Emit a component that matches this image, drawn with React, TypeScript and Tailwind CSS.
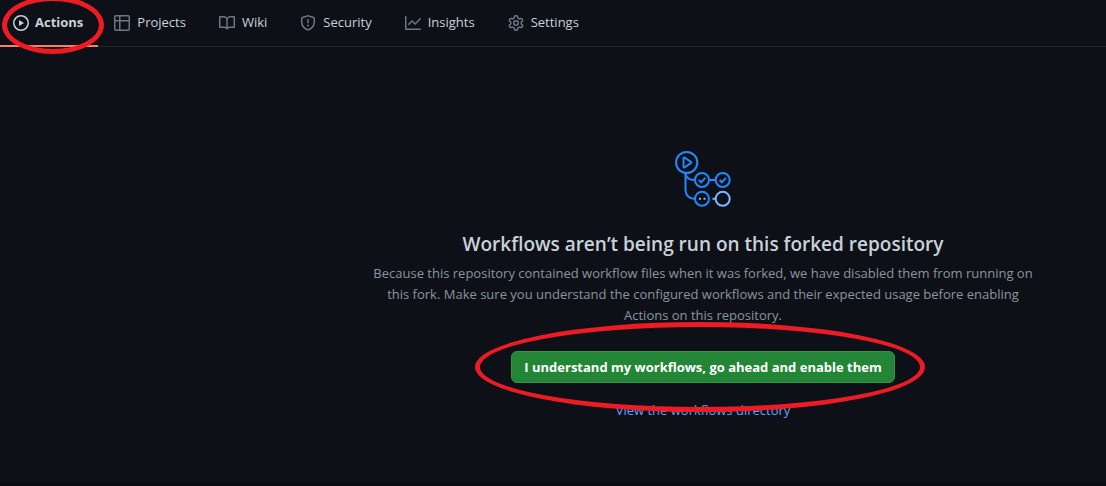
const tabs = [
  {
    label: "Actions",
    icon: "M1.5 8a6.5 6.5 0 1113 0 6.5 6.5 0 01-13 0zM8 0a8 8 0 100 16A8 8 0 008 0zM6.379 5.227A.25.25 0 006 5.442v5.117a.25.25 0 00.379.214l4.264-2.559a.25.25 0 000-.428L6.379 5.227z",
  },
  {
    label: "Projects",
    icon: "M0 1.75C0 .784.784 0 1.75 0h12.5C15.216 0 16 .784 16 1.75v12.5A1.75 1.75 0 0114.25 16H1.75A1.75 1.75 0 010 14.25V1.75zM1.5 6.5v7.75c0 .138.112.25.25.25H5v-8H1.5zM5 5V1.5H1.75a.25.25 0 00-.25.25V5H5zm1.5 1.5v8h7.75a.25.25 0 00.25-.25V6.5h-8zm8-1.5V1.75a.25.25 0 00-.25-.25H6.5V5h8z",
  },
  {
    label: "Wiki",
    icon: "M0 1.75A.75.75 0 01.75 1h4.253c1.227 0 2.317.59 3 1.501A3.744 3.744 0 0111.006 1h4.245a.75.75 0 01.75.75v10.5a.75.75 0 01-.75.75h-4.507a2.25 2.25 0 00-1.591.659l-.622.621a.75.75 0 01-1.06 0l-.622-.621A2.25 2.25 0 005.258 13H.75a.75.75 0 01-.75-.75V1.75zm8.755 3a2.25 2.25 0 012.25-2.25H14.5v9h-3.757c-.71 0-1.4.201-1.992.572l.004-7.322zm-1.504 7.324l.004-5.073-.002-2.253A2.25 2.25 0 005.003 2.5H1.5v9h3.757a3.75 3.75 0 011.994.574z",
  },
  {
    label: "Security",
    icon: "M7.467.133a1.75 1.75 0 011.066 0l5.25 1.68A1.75 1.75 0 0115 3.48V7c0 1.566-.32 3.182-1.303 4.682-.983 1.498-2.585 2.813-5.032 3.855a1.7 1.7 0 01-1.33 0c-2.447-1.042-4.049-2.357-5.032-3.855C1.32 10.182 1 8.566 1 7V3.48a1.75 1.75 0 011.217-1.667l5.25-1.68zm.61 1.429a.25.25 0 00-.153 0l-5.25 1.68a.25.25 0 00-.174.238V7c0 1.358.275 2.666 1.057 3.86.784 1.194 2.121 2.34 4.366 3.297a.2.2 0 00.154 0c2.245-.956 3.582-2.104 4.366-3.298C13.225 9.666 13.5 8.36 13.5 7V3.48a.25.25 0 00-.174-.237l-5.25-1.68zM9 10.5a1 1 0 11-2 0 1 1 0 012 0zm-.25-5.75a.75.75 0 10-1.5 0v3a.75.75 0 001.5 0v-3z",
  },
  {
    label: "Insights",
    icon: "M1.5 1.75a.75.75 0 00-1.5 0v12.5c0 .414.336.75.75.75h14.5a.75.75 0 000-1.5H1.5V1.75zm14.28 2.53a.75.75 0 00-1.06-1.06L10 7.94 7.53 5.47a.75.75 0 00-1.06 0L3.22 8.72a.75.75 0 001.06 1.06L7 7.06l2.47 2.47a.75.75 0 001.06 0l5.25-5.25z",
  },
  {
    label: "Settings",
    icon: "M7.429 1.525a6.593 6.593 0 011.142 0c.036.003.108.036.137.146l.289 1.105c.147.56.55.967.997 1.189.174.086.341.183.501.29.417.278.97.423 1.53.27l1.102-.303c.11-.03.175.016.195.046.219.31.41.641.573.989.014.031.022.11-.059.19l-.815.806c-.411.406-.562.957-.53 1.456a4.588 4.588 0 010 .582c-.032.499.119 1.05.53 1.456l.815.806c.08.08.073.159.059.19a6.494 6.494 0 01-.573.99c-.02.029-.086.074-.195.045l-1.103-.303c-.559-.153-1.112-.008-1.529.27-.16.107-.327.204-.5.29-.449.222-.851.628-.998 1.189l-.289 1.105c-.029.11-.101.143-.137.146a6.613 6.613 0 01-1.142 0c-.036-.003-.108-.037-.137-.146l-.289-1.105c-.147-.56-.55-.967-.997-1.189a4.502 4.502 0 01-.501-.29c-.417-.278-.97-.423-1.53-.27l-1.102.303c-.11.03-.175-.016-.195-.046a6.492 6.492 0 01-.573-.989c-.014-.031-.022-.11.059-.19l.815-.806c.411-.406.562-.957.53-1.456a4.587 4.587 0 010-.582c.032-.499-.119-1.05-.53-1.456l-.815-.806c-.08-.08-.073-.159-.059-.19a6.44 6.44 0 01.573-.99c.02-.029.086-.075.195-.045l1.103.303c.559.153 1.112.008 1.529-.27.16-.107.327-.204.5-.29.449-.222.851-.628.998-1.189l.289-1.105c.029-.11.101-.143.137-.146zM8 0c-.236 0-.47.01-.701.03-.743.065-1.29.615-1.458 1.261l-.29 1.106c-.017.066-.078.158-.211.224a5.994 5.994 0 00-.668.386c-.123.082-.233.09-.3.071L3.27 2.776c-.644-.177-1.392.02-1.82.63a7.977 7.977 0 00-.704 1.217c-.315.675-.111 1.422.363 1.891l.815.806c.05.048.098.147.088.294a6.084 6.084 0 000 .772c.01.147-.038.246-.088.294l-.815.806c-.474.469-.678 1.216-.363 1.891.2.428.436.835.704 1.218.428.609 1.176.806 1.82.63l1.103-.303c.066-.019.176-.011.299.071.213.143.436.272.668.386.133.066.194.158.212.224l.289 1.106c.169.646.715 1.196 1.458 1.26a8.094 8.094 0 001.402 0c.743-.064 1.29-.614 1.458-1.26l.29-1.106c.017-.066.078-.158.211-.224a5.98 5.98 0 00.668-.386c.123-.082.233-.09.3-.071l1.102.302c.644.177 1.392-.02 1.82-.63.268-.382.505-.789.704-1.217.315-.675.111-1.422-.364-1.891l-.814-.806c-.05-.048-.098-.147-.088-.294a6.1 6.1 0 000-.772c-.01-.147.039-.246.088-.294l.814-.806c.475-.469.679-1.216.364-1.891a7.992 7.992 0 00-.704-1.218c-.428-.609-1.176-.806-1.82-.63l-1.103.303c-.066.019-.176.011-.299-.071a5.991 5.991 0 00-.668-.386c-.133-.066-.194-.158-.212-.224L10.16 1.29C9.99.645 9.444.095 8.701.031A8.094 8.094 0 008 0zM9.5 8a1.5 1.5 0 11-3 0 1.5 1.5 0 013 0zM11 8a3 3 0 11-6 0 3 3 0 016 0z",
  },
];

function RepoNav() {
  return (
    <nav aria-label="Repository" className="flex h-[47px] items-stretch border-b border-[#21262d]">
      {tabs.map(({ label, icon }, i) => (
        <div key={label} className="relative flex">
          <a
            href={"#" + label.toLowerCase()}
            aria-current={i === 0 ? "page" : undefined}
            className={
              i === 0
                ? "-mb-px flex items-center gap-1.5 border-b-2 border-[#f78166] pr-[15px] pl-[13px] font-bold text-[#c9d1d9]"
                : "flex items-center gap-[7px] pr-[17px] pl-4 text-[#c9d1d9]"
            }
          >
            <svg
              width="16"
              height="16"
              viewBox="0 0 16 16"
              fill="currentColor"
              fillRule="evenodd"
              aria-hidden="true"
              className={i === 0 ? "text-[#c9d1d9]" : "text-[#6e7681]"}
            >
              <path d={icon} />
            </svg>
            {label}
          </a>
          {i === 0 && <Ring className="-top-1 left-[2px] h-[58px] w-[102px]" />}
        </div>
      ))}
    </nav>
  );
}

function Ring({ className }: { className: string }) {
  return (
    <span
      aria-hidden="true"
      className={"pointer-events-none absolute rounded-[50%] border-5 border-[#ed1c24] " + className}
    />
  );
}

function WorkflowArt() {
  return (
    <svg width="60" height="60" viewBox="0 0 60 60" fill="none" stroke="#2188ff" strokeWidth="2" aria-hidden="true">
      <circle cx="13.7" cy="13.5" r="10.6" />
      <path
        d="M10.5 9.2v8.6c0 .6.6.9 1.1.6l6.3-4.2c.5-.3.5-1 0-1.3l-6.3-4.2c-.5-.3-1.1 0-1.1.5z"
        strokeLinejoin="round"
      />
      <path d="M12.5 24v17c0 5 3.5 8.8 9 8.8M12.5 24c.5 4.500 4 7 9 7M36 31h7" />
      <circle cx="29" cy="31" r="7" />
      <circle cx="49.7" cy="31" r="7" />
      <circle cx="29" cy="49.8" r="7" />
      <path d="M25.8 31l2.4 2.3 4-4.5M46.5 31l2.4 2.3 4-4.5" />
      <path d="M26 49.8h2M30.5 49.8h2" stroke="#79b8ff" />
      <circle cx="49.7" cy="49.8" r="7" stroke="#79b8ff" />
      <path d="M39.500 49.8h3" stroke="#79b8ff" />
    </svg>
  );
}

export default function App() {
  return (
    <div className="flex min-h-screen flex-col overflow-hidden border-b-3 border-[#0a0c10] bg-[#0d1117] font-['Open_Sans','Noto_Sans',sans-serif] text-[13px]">
      <RepoNav />
      <main className="flex flex-1 flex-col items-center pt-[102px] pl-[300px] text-center">
        <WorkflowArt />
        <h1 className="mt-5 text-[19px] leading-[30px] font-semibold text-[#c9d1d9]">
          Workflows aren’t being run on this forked repository
        </h1>
        <p className="mt-1 max-w-[672px] leading-[21px] text-[#8b949e]">
          Because this repository contained workflow files when it was forked, we have disabled them from running on
          this fork. Make sure you understand the configured workflows and their expected usage before enabling
          Actions on this repository.
        </p>
        <div className="relative mt-[25px] flex flex-col items-center">
          <button
            type="button"
            className="h-8 w-96 rounded-md border border-[#37914a] bg-[#238636] pt-px font-bold text-white"
          >
            I understand my workflows, go ahead and enable them
          </button>
          <a href="#workflows" className="mt-[17px] leading-[21px] text-[#58a6ff]">
            View the workflows directory
          </a>
          <Ring className="-top-[29px] -left-[36px] h-[90px] w-[450px]" />
        </div>
      </main>
    </div>
  );
}
